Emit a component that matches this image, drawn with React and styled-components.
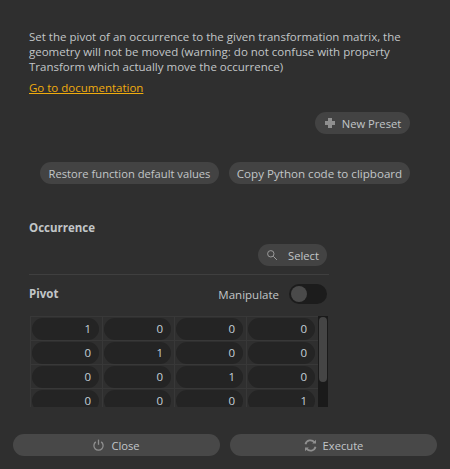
import React from "react"
import styled, { createGlobalStyle } from "styled-components"

const GlobalStyle = createGlobalStyle`
	html, body {
		margin: 0;
		padding: 0;
		background-color: #2f2f2f;
	}
	body {
		font-family: "Open Sans", "Noto Sans", sans-serif;
		font-size: 11.5px;
		color: #c2c6c8;
	}
`

const Page = styled.div`
	width: 450px;
	height: 469px;
	box-sizing: border-box;
	overflow: hidden;
	padding-top: 29px;
	display: flex;
	flex-direction: column;
`

const Content = styled.div`
	padding: 0 40px 0 29px;
	flex: 1;
`

const Description = styled.p`
	margin: 0;
	width: 381px;
	line-height: 15px;
`

const DocLink = styled.a`
	display: inline-block;
	margin-top: 6px;
	line-height: 15px;
	color: #f0ac0e;
	text-decoration: underline;
`

const ButtonRow = styled.div`
	display: flex;
	justify-content: flex-end;
	gap: 10px;
	margin-top: ${(p) => p.$top}px;
`

const PillButton = styled.button`
	height: 22px;
	width: ${(p) => p.$width}px;
	padding: 0;
	border: none;
	border-radius: 11px;
	background-color: #434343;
	color: #c2c6c8;
	font-family: inherit;
	font-size: ${(p) => p.$size || 11.2}px;
	display: flex;
	align-items: center;
	justify-content: center;
	gap: ${(p) => p.$gap || 0}px;
`

const SectionLabel = styled.div`
	font-weight: 700;
	font-size: 11.5px;
	line-height: 16px;
`

const OccurrenceLabel = styled(SectionLabel)`
	margin-top: 36px;
`

const SelectRow = styled.div`
	width: 298px;
	display: flex;
	justify-content: flex-end;
	margin-top: 8px;
`

const Divider = styled.div`
	width: 300px;
	height: 1px;
	background-color: #3f3f3f;
	margin-top: 8px;
`

const PivotRow = styled.div`
	width: 298px;
	height: 20px;
	display: flex;
	align-items: center;
	margin-top: 9px;
`

const Manipulate = styled.span`
	margin-left: auto;
	margin-right: 10px;
`

const Toggle = styled.div`
	width: 38px;
	height: 20px;
	box-sizing: border-box;
	padding: 2px;
	border-radius: 10px;
	background-color: #1c1c1c;
`

const ToggleKnob = styled.div`
	width: 16px;
	height: 16px;
	border-radius: 50%;
	background-color: #4a4a4a;
`

const MatrixArea = styled.div`
	width: 299px;
	height: 91px;
	display: flex;
	margin-top: 12px;
	margin-left: 1px;
`

const MatrixGrid = styled.div`
	width: 288px;
	height: 91px;
	overflow: hidden;
	display: grid;
	grid-template-columns: repeat(4, 72px);
	grid-auto-rows: 24px;
`

const Cell = styled.div`
	box-sizing: border-box;
	padding: 1px;
	border-top: 1px solid #383838;
	border-left: 1px solid #383838;
`

const CellPill = styled.div`
	height: 22px;
	width: 67px;
	border-radius: 11px;
	background-color: #242424;
	box-sizing: border-box;
	padding-right: 8px;
	text-align: right;
	line-height: 22px;
	color: #c4d0d8;
`

const ScrollTrack = styled.div`
	width: 10px;
	height: 91px;
	box-sizing: border-box;
	padding: 1px;
	background-color: #1a1a1a;
`

const ScrollThumb = styled.div`
	height: 65px;
	border-radius: 4px;
	background-color: #454545;
`

const Footer = styled.div`
	display: flex;
	gap: 10px;
	padding: 0 13px 13px 13px;
`

const FooterButton = styled(PillButton)`
	flex: 1;
	background-color: #484848;
`

const PlusIcon = () => (
	<svg width="12" height="12" viewBox="0 0 12 12">
		<path d="M4 1h4v3h3v4H8v3H4V8H1V4h3z" fill="#8f8f8f" />
	</svg>
)

const SearchIcon = () => (
	<svg width="12" height="12" viewBox="0 0 12 12" fill="none" stroke="#9a9a9a">
		<circle cx="4.8" cy="4.8" r="3.2" />
		<path d="M7.3 7.3l3.6 3.6" />
	</svg>
)

const PowerIcon = () => (
	<svg width="11" height="12" viewBox="0 0 11 12" fill="none" stroke="#8f8f8f" strokeWidth="1.3">
		<path d="M2.8 2.9a4.6 4.6 0 1 0 5.4 0" />
		<path d="M5.5 .6v5.2" />
	</svg>
)

const RefreshIcon = () => (
	<svg width="13" height="13" viewBox="0 0 13 13" fill="none" stroke="#8f8f8f" strokeWidth="1.8">
		<path d="M1.5 5.2A5 5 0 0 1 10.4 3.4" />
		<path d="M11.5 7.8A5 5 0 0 1 2.6 9.6" />
		<path d="M12 .8v3.8H8.2z" fill="#8f8f8f" stroke="none" />
		<path d="M1 12.2V8.4h3.8z" fill="#8f8f8f" stroke="none" />
	</svg>
)

const matrix = [
	[1, 0, 0, 0],
	[0, 1, 0, 0],
	[0, 0, 1, 0],
	[0, 0, 0, 1],
]

function App() {
	return (
		<Page>
			<GlobalStyle />
			<Content>
				<Description>
					Set the pivot of an occurrence to the given transformation matrix, the geometry will not be moved (warning: do not confuse with property Transform which actually move the occurrence)
				</Description>
				<DocLink href="#">Go to documentation</DocLink>
				<ButtonRow $top={17}>
					<PillButton $width={95} $gap={6}>
						<PlusIcon />
						New Preset
					</PillButton>
				</ButtonRow>
				<ButtonRow $top={28}>
					<PillButton $width={179}>Restore function default values</PillButton>
					<PillButton $width={181} $size={11.6}>Copy Python code to clipboard</PillButton>
				</ButtonRow>
				<OccurrenceLabel>Occurrence</OccurrenceLabel>
				<SelectRow>
					<PillButton $width={69} $gap={10}>
						<SearchIcon />
						Select
					</PillButton>
				</SelectRow>
				<Divider />
				<PivotRow>
					<SectionLabel>Pivot</SectionLabel>
					<Manipulate>Manipulate</Manipulate>
					<Toggle>
						<ToggleKnob />
					</Toggle>
				</PivotRow>
				<MatrixArea>
					<MatrixGrid>
						{matrix.flat().map((value, i) => (
							<Cell key={i}>
								<CellPill>{value}</CellPill>
							</Cell>
						))}
					</MatrixGrid>
					<ScrollTrack>
						<ScrollThumb />
					</ScrollTrack>
				</MatrixArea>
			</Content>
			<Footer>
				<FooterButton $gap={7}>
					<PowerIcon />
					Close
				</FooterButton>
				<FooterButton $gap={6}>
					<RefreshIcon />
					Execute
				</FooterButton>
			</Footer>
		</Page>
	)
}

export default App
